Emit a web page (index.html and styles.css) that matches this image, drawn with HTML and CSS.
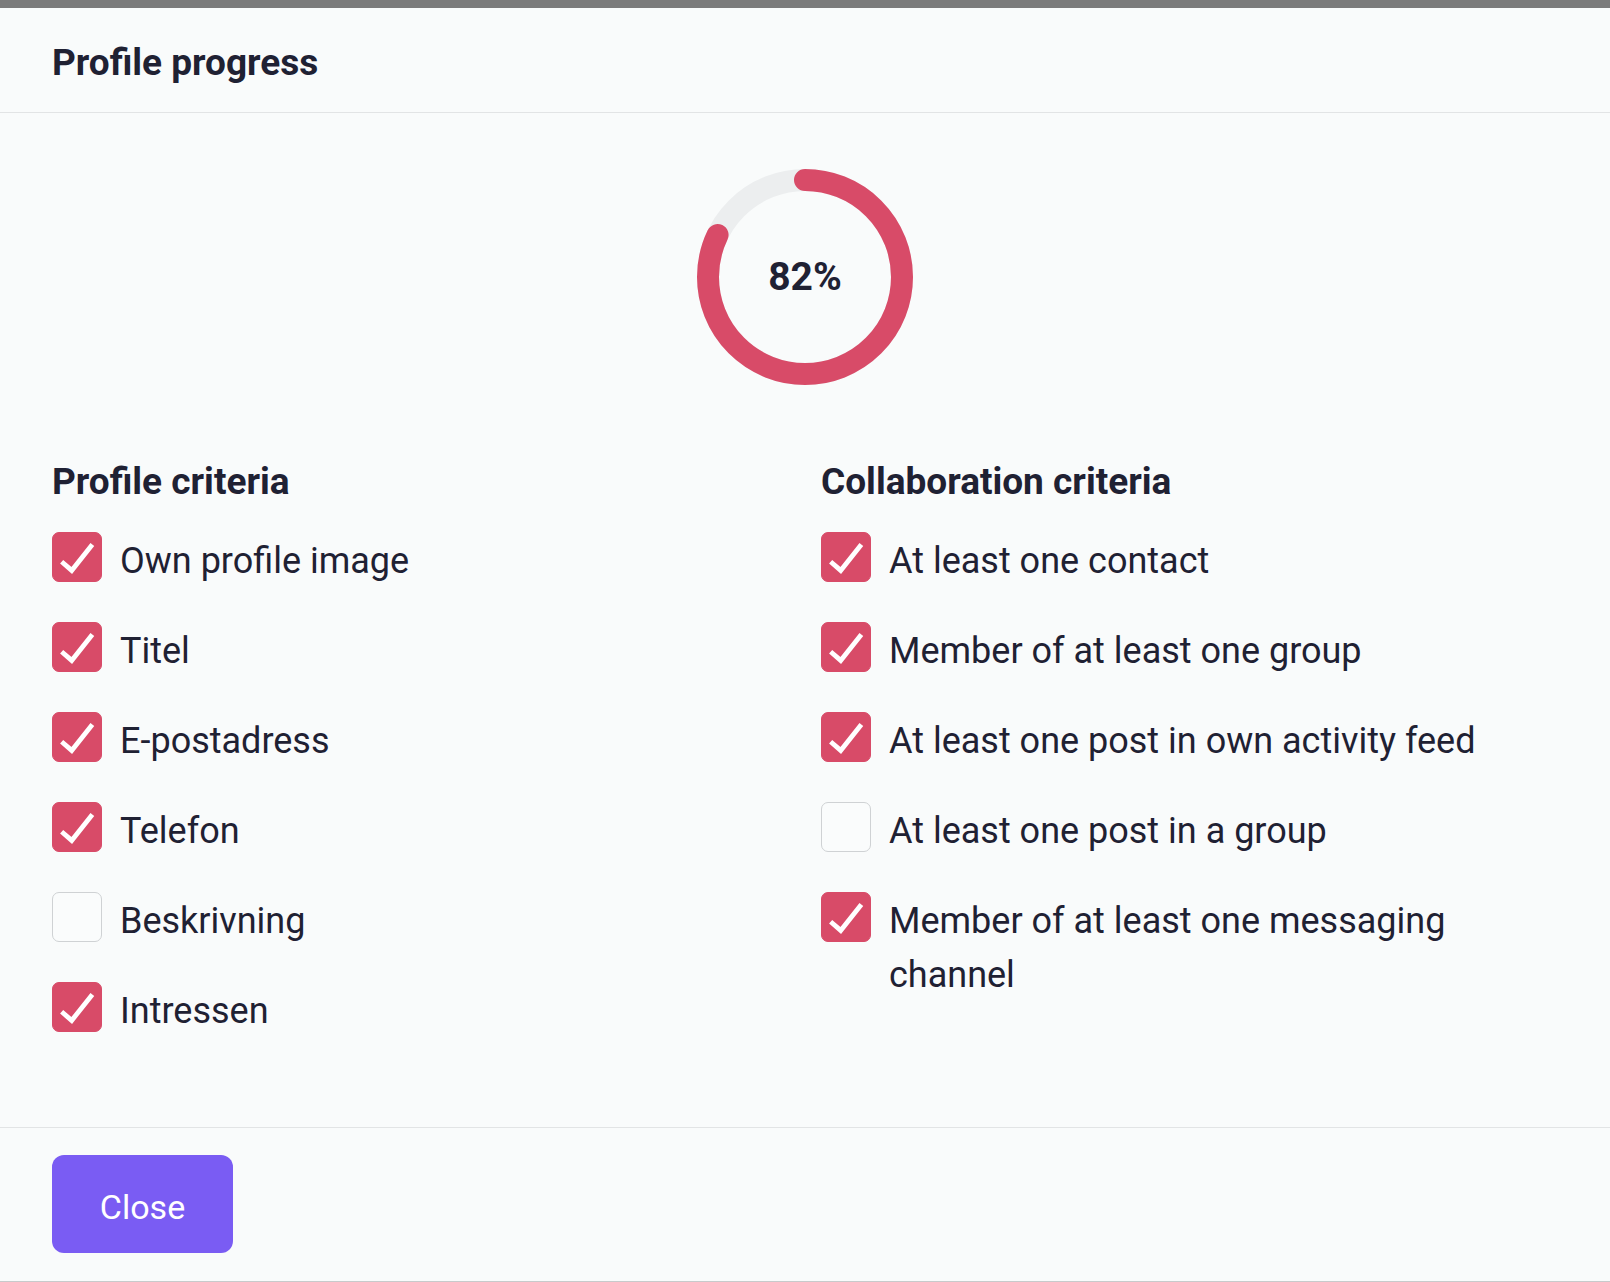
FILE: index.html
```html
<!DOCTYPE html>
<html lang="en">
<head>
  <meta charset="UTF-8" />
  <title>Profile progress</title>
  <link rel="stylesheet" href="styles.css">
</head>

<body>
  <div class="modal">
    <div class="modal-header">
      <h2>Profile progress</h2>
    </div>

    <div class="modal-body">
      <div class="ring">
        <svg width="216" height="216" viewBox="0 0 216 216">
          <circle class="ring-track" cx="108" cy="108" r="97" />
          <circle class="ring-value" cx="108" cy="108" r="97"
                  stroke-dasharray="499.8 609.5" transform="rotate(-90 108 108)" />
        </svg>
        <span class="ring-label">82%</span>
      </div>

      <div class="criteria">
        <div class="group">
          <h3>Profile criteria</h3>
          <ul>
            <li><span class="box checked"><svg viewBox="0 0 50 50"><polyline points="9,30 19.5,39 41,12" /></svg></span><span class="text">Own profile image</span></li>
            <li><span class="box checked"><svg viewBox="0 0 50 50"><polyline points="9,30 19.5,39 41,12" /></svg></span><span class="text">Titel</span></li>
            <li><span class="box checked"><svg viewBox="0 0 50 50"><polyline points="9,30 19.5,39 41,12" /></svg></span><span class="text">E-postadress</span></li>
            <li><span class="box checked"><svg viewBox="0 0 50 50"><polyline points="9,30 19.5,39 41,12" /></svg></span><span class="text">Telefon</span></li>
            <li><span class="box"></span><span class="text">Beskrivning</span></li>
            <li><span class="box checked"><svg viewBox="0 0 50 50"><polyline points="9,30 19.5,39 41,12" /></svg></span><span class="text">Intressen</span></li>
          </ul>
        </div>

        <div class="group">
          <h3>Collaboration criteria</h3>
          <ul>
            <li><span class="box checked"><svg viewBox="0 0 50 50"><polyline points="9,30 19.5,39 41,12" /></svg></span><span class="text">At least one contact</span></li>
            <li><span class="box checked"><svg viewBox="0 0 50 50"><polyline points="9,30 19.5,39 41,12" /></svg></span><span class="text">Member of at least one group</span></li>
            <li><span class="box checked"><svg viewBox="0 0 50 50"><polyline points="9,30 19.5,39 41,12" /></svg></span><span class="text">At least one post in own activity feed</span></li>
            <li><span class="box"></span><span class="text">At least one post in a group</span></li>
            <li><span class="box checked"><svg viewBox="0 0 50 50"><polyline points="9,30 19.5,39 41,12" /></svg></span><span class="text">Member of at least one messaging channel</span></li>
          </ul>
        </div>
      </div>
    </div>

    <div class="modal-footer">
      <button type="button">Close</button>
    </div>
  </div>
</body>
</html>
```

FILE: styles.css
```css
/* --- Global --- */
* { box-sizing: border-box; margin: 0; padding: 0; }
body {
  font-family: Roboto, 'Noto Sans', sans-serif;
  background: #7b7b7b;
  color: #1f2133;
  padding-top: 8px;
  min-height: 100vh;
}

/* --- Modal --- */
.modal {
  background: #f9fbfb;
  height: 1274px;
  display: flex;
  flex-direction: column;
  border-bottom: 1px solid #c8cacb;
}

.modal-header {
  height: 105px;
  padding: 4px 52px 0;
  display: flex;
  align-items: center;
  border-bottom: 1px solid #e2e4e5;
}
.modal-header h2 {
  font-size: 37px;
  font-weight: 700;
}

.modal-body {
  flex: 1;
  padding: 56px 52px 0;
}

/* --- Progress ring --- */
.ring {
  display: grid;
  place-items: center;
  width: 216px;
  height: 216px;
  margin: 0 auto;
}
.ring > * { grid-area: 1 / 1; }
.ring circle {
  fill: none;
  stroke-width: 22;
}
.ring-track { stroke: #eceeef; }
.ring-value {
  stroke: #d84b68;
  stroke-linecap: round;
}
.ring-label {
  font-size: 39px;
  font-weight: 700;
}

/* --- Criteria lists --- */
.criteria {
  display: grid;
  grid-template-columns: 1fr 1fr;
  column-gap: 32px;
  margin-top: 75px;
}
.group h3 {
  font-size: 37px;
  font-weight: 700;
  line-height: 44px;
  margin-bottom: 28px;
}
.group ul {
  list-style: none;
  display: flex;
  flex-direction: column;
  gap: 34px;
}
.group li {
  display: flex;
  align-items: flex-start;
  gap: 18px;
}
.box {
  flex: none;
  width: 50px;
  height: 50px;
  border-radius: 7px;
  border: 1px solid #cfd2d4;
  background: #fafcfc;
}
.box.checked {
  background: #d84b68;
  border-color: #d84b68;
}
.box svg {
  display: block;
  width: 48px;
  height: 48px;
}
.box polyline {
  fill: none;
  stroke: #fff;
  stroke-width: 5;
}
.text {
  font-size: 36px;
  line-height: 54px;
  padding-top: 2px;
}

/* --- Footer --- */
.modal-footer {
  border-top: 1px solid #e2e4e5;
  padding: 27px 52px 28px;
}
button {
  display: block;
  width: 181px;
  height: 98px;
  padding-top: 5px;
  background: #7a5cf3;
  color: #fff;
  border: none;
  border-radius: 12px;
  font-family: inherit;
  font-size: 34px;
  cursor: pointer;
}
```
